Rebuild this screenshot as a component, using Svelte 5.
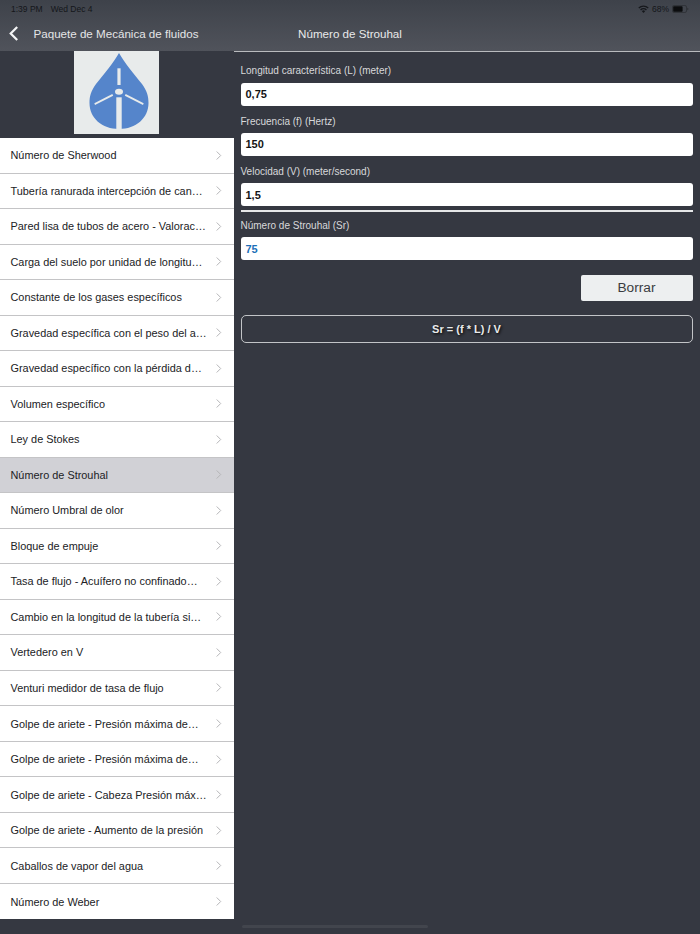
<script>
  const rows = [
    "Número de Sherwood",
    "Tubería ranurada intercepción de can…",
    "Pared lisa de tubos de acero - Valorac…",
    "Carga del suelo por unidad de longitu…",
    "Constante de los gases específicos",
    "Gravedad específica con el peso del a…",
    "Gravedad específico con la pérdida d…",
    "Volumen específico",
    "Ley de Stokes",
    "Número de Strouhal",
    "Número Umbral de olor",
    "Bloque de empuje",
    "Tasa de flujo - Acuífero no confinado…",
    "Cambio en la longitud de la tubería si…",
    "Vertedero en V",
    "Venturi medidor de tasa de flujo",
    "Golpe de ariete - Presión máxima de…",
    "Golpe de ariete - Presión máxima de…",
    "Golpe de ariete - Cabeza Presión máx…",
    "Golpe de ariete - Aumento de la presión",
    "Caballos de vapor del agua",
    "Número de Weber"
  ];
  const selected = "Número de Strouhal";

  const inputs = [
    { label: "Longitud característica (L) (meter)", value: "0,75" },
    { label: "Frecuencia (f) (Hertz)", value: "150" },
    { label: "Velocidad (V) (meter/second)", value: "1,5" }
  ];
</script>

<div class="screen">
  <header class="topbar">
    <div class="status">
      <span class="time">1:39 PM</span>
      <span class="date">Wed Dec 4</span>
      <span class="status-right">
        <svg width="11" height="8" viewBox="0 0 11 8">
          <path d="M0.3 2.6a7.3 7.3 0 0 1 10.4 0l-1 1a5.9 5.9 0 0 0-8.4 0z" fill="#16181c" />
          <path d="M2.1 4.4a4.8 4.8 0 0 1 6.8 0l-1 1a3.4 3.4 0 0 0-4.8 0z" fill="#16181c" />
          <path d="M3.9 6.2a2.2 2.2 0 0 1 3.2 0L5.5 7.9z" fill="#16181c" />
        </svg>
        <span>68%</span>
        <svg width="17" height="8" viewBox="0 0 17 8">
          <rect x="0.5" y="0.5" width="14" height="7" rx="1.6" fill="none" stroke="#2a2c31" stroke-width="0.7" />
          <rect x="1.2" y="1.2" width="9.4" height="5.6" rx="0.8" fill="#0b0c0e" />
          <path d="M15.4 2.8c0.7 0.2 1 0.6 1 1.2s-0.3 1-1 1.2z" fill="#2a2c31" />
        </svg>
      </span>
    </div>
    <div class="navs">
      <div class="nav-left">
        <svg class="back" width="10" height="15" viewBox="0 0 10 15">
          <path d="M8.2 1L1.700 7.500l6.500 6.500" fill="none" stroke="#f4f5f6" stroke-width="2.2" />
        </svg>
        <span>Paquete de Mecánica de fluidos</span>
      </div>
      <div class="nav-right">Número de Strouhal</div>
    </div>
  </header>

  <div class="body">
    <aside class="side">
      <div class="logo">
        <svg width="85" height="83" viewBox="0 0 85 83">
          <rect width="85" height="83" fill="#e8ebeb" />
          <path d="M45 3 C40 12 30 24 22 34 C17 41 15.500 46 15.500 53 C15.500 68 28 79 45 79 C62 79 74.500 68 74.500 53 C74.500 46 73 41 68 34 C60 24 50 12 45 3Z" transform="translate(0 -1)" fill="#5585cb" />
          <rect x="43.400" y="17.300" width="3.200" height="16.700" fill="#e8ebeb" />
          <rect x="42.300" y="46.300" width="5.400" height="31.700" fill="#e8ebeb" />
          <ellipse cx="45" cy="40.700" rx="4" ry="3" fill="#e8ebeb" />
          <path d="M20.300 52.300 L38.300 43 L39.200 44.800 L21 54Z" fill="#e8ebeb" />
          <path d="M69.700 52.300 L51.700 43 L50.800 44.800 L69 54Z" fill="#e8ebeb" />
        </svg>
      </div>
      <ul class="list">
        {#each rows as row}
          <li class="row" class:selected={row === selected}>
            <span class="row-text">{row}</span>
            <svg class="chev" width="6" height="9" viewBox="0 0 6 9">
              <path d="M0.700 0.500L4.700 4.500L0.700 8.500" fill="none" stroke="#b5b5b8" stroke-width="1" />
            </svg>
          </li>
        {/each}
      </ul>
    </aside>

    <main class="detail">
      {#each inputs as field}
        <div class="label">{field.label}</div>
        <div class="field">{field.value}</div>
      {/each}
      <hr class="divider" />
      <div class="label result-label">Número de Strouhal (Sr)</div>
      <div class="field result">75</div>
      <div class="actions">
        <button class="clear">Borrar</button>
      </div>
      <div class="formula"><span>Sr = (f * L) / V</span></div>
    </main>
  </div>
  <div class="scrollbar"></div>
</div>

<style>
  :global(body) {
    margin: 0;
    background: #353841;
  }

  .screen {
    position: relative;
    width: 700px;
    height: 934px;
    overflow: hidden;
    background: #353841;
    font-family: "Liberation Sans", Arial, sans-serif;
  }

  .topbar {
    height: 51px;
    background: linear-gradient(#3e424a, #50535b);
  }

  .status {
    height: 17px;
    display: flex;
    align-items: center;
    gap: 8px;
    padding: 0 11px;
    font-size: 8.500px;
    color: #14161a;
  }

  .status-right {
    margin-left: auto;
    display: flex;
    align-items: center;
    gap: 3px;
  }

  .navs {
    display: flex;
    height: 32px;
    align-items: center;
  }

  .nav-left {
    width: 234px;
    box-sizing: border-box;
    display: flex;
    align-items: center;
    gap: 14.500px;
    padding-left: 9px;
    font-size: 11.600px;
    color: #e4e5e7;
  }

  .nav-right {
    width: 232px;
    text-align: center;
    font-size: 11.600px;
    color: #e8e9ea;
  }

  .body {
    display: grid;
    grid-template-columns: 233.500px 1fr;
  }

  .side {
    display: flex;
    flex-direction: column;
  }

  .logo {
    height: 87px;
    display: flex;
    justify-content: center;
  }

  .list {
    list-style: none;
    margin: 0;
    padding: 0;
    background: #fff;
  }

  .row {
    height: 35.520px;
    box-sizing: border-box;
    display: flex;
    align-items: center;
    justify-content: space-between;
    padding: 0 11.500px 0 10.500px;
    background: #fff;
    border-bottom: 1px solid #c4c4c6;
    color: #212225;
    font-size: 10.900px;
  }

  .row:last-child {
    border-bottom: none;
  }

  .selected {
    background: #d1d1d6;
  }

  .row-text {
    white-space: nowrap;
  }

  .detail {
    border-top: 1px solid #b9bbbe;
    padding: 0 7.500px 0 7px;
    color: #d8d9db;
  }

  .label {
    height: 15px;
    margin-top: 11.300px;
    line-height: 15px;
    font-size: 10px;
  }

  .label + .field + .label {
    margin-top: 8px;
  }

  .field {
    height: 23px;
    margin-top: 4.300px;
    box-sizing: border-box;
    padding: 0 5px;
    display: flex;
    align-items: center;
    background: #fff;
    border-radius: 3px;
    font-size: 11px;
    font-weight: 700;
    color: #141414;
  }

  .divider {
    margin: 4px 0 0;
    border: none;
    height: 1.500px;
    background: #e6e7e8;
  }

  .result-label {
    margin-top: 6.300px;
  }

  .result {
    color: #1c6fb8;
  }

  .actions {
    display: flex;
    justify-content: flex-end;
    margin-top: 14.700px;
  }

  .clear {
    width: 112px;
    height: 26px;
    border: none;
    border-radius: 2px;
    background: #edeff0;
    color: #3a3c40;
    font-family: inherit;
    font-size: 13.700px;
    padding: 0;
  }

  .formula {
    margin-top: 14px;
    height: 28px;
    box-sizing: border-box;
    border: 1px solid #c2c4c7;
    border-radius: 5px;
    display: flex;
    align-items: center;
    justify-content: center;
    font-size: 11px;
    font-weight: 700;
    color: #e9eaeb;
    text-shadow: 1px 1px 3px #000;
  }

  .scrollbar {
    position: absolute;
    left: 242px;
    top: 925px;
    width: 186px;
    height: 3px;
    border-radius: 2px;
    background: #42454d;
  }
</style>
